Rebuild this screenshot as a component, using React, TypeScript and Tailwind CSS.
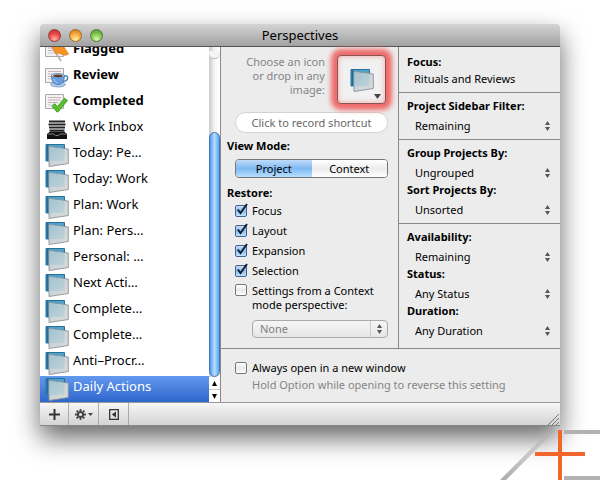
import { useState } from "react";
import type { ReactNode } from "react";

function PerspectiveIcon() {
  return (
    <svg width="24" height="24" viewBox="0 0 24 24" fill="none" className="shrink-0">
      <defs>
        <linearGradient id="frame" x1="0" y1="0" x2="1" y2="1">
          <stop offset="0" stopColor="#bccdd4" />
          <stop offset="1" stopColor="#dcdcdc" />
        </linearGradient>
        <linearGradient id="pane" x1="0" y1="0" x2="1" y2="1">
          <stop offset="0" stopColor="#a3c3cf" />
          <stop offset="1" stopColor="#c0d2d9" />
        </linearGradient>
      </defs>
      <path d="M1 1.500H19.500V18H1Z" fill="#4da3cc" stroke="#2b6f96" />
      <path d="M1.500 2H3.500V17.500H1.500Z" fill="#1f6d9c" />
      <path d="M4 3.500L23.300 6V20.500L4 23.500Z" fill="url(#frame)" stroke="#8c9296" strokeWidth=".9" />
      <path d="M4.500 4.200L19.500 6V18H4.500Z" fill="url(#pane)" />
    </svg>
  );
}

function Sheet() {
  return (
    <>
      <path d="M.5 3.500H18.500V17.500H.5Z" fill="#f4f3f3" stroke="#a9a9ab" />
      <path d="M3 6.500H16M3 9H16M3 11.500H13" stroke="#c9b3b5" />
      <path d="M3 14H11" stroke="#c3c9d4" />
    </>
  );
}

function FlaggedIcon() {
  return (
    <svg width="24" height="24" viewBox="0 0 24 24" fill="none" className="shrink-0">
      <Sheet />
      <path d="M7 8L16 22" stroke="#b3aca4" strokeWidth="1.500" />
      <path d="M7 7C11 4 14 10 19 8L23.500 15C18 19 16 12 11 15Z" fill="#f7931e" stroke="#d9741a" strokeWidth=".6" />
    </svg>
  );
}

function ReviewIcon() {
  return (
    <svg width="24" height="24" viewBox="0 0 24 24" fill="none" className="shrink-0">
      <Sheet />
      <ellipse cx="13" cy="19.500" rx="7.500" ry="2.500" fill="#aac8ea" stroke="#6f93bf" strokeWidth=".7" />
      <path d="M19 11C24 9.500 24 16 18 16.500" stroke="#4f83bf" strokeWidth="1.500" />
      <path d="M6.500 10.500H19.500C19.500 16 17.500 19.500 13 19.500S6.500 16 6.500 10.500Z" fill="#6a9fdc" stroke="#3f6fa8" strokeWidth=".7" />
      <ellipse cx="13" cy="10.500" rx="6.500" ry="2" fill="#d8e6f5" stroke="#4a79b0" strokeWidth=".7" />
      <ellipse cx="13" cy="10.800" rx="4.800" ry="1.200" fill="#5c3a2a" />
      <path d="M9 14C9.500 16 10.500 17.500 12 18" stroke="#b9d6f6" />
    </svg>
  );
}

function CompletedIcon() {
  return (
    <svg width="24" height="24" viewBox="0 0 24 24" fill="none" className="shrink-0">
      <Sheet />
      <path d="M7 15.500L9.500 12.500L12.500 15.500L19.500 7L22.500 9.500L13 21H12Z" fill="#57bf2b" stroke="#3a9a1c" strokeWidth=".8" />
    </svg>
  );
}

function InboxIcon() {
  return (
    <svg width="24" height="24" viewBox="0 0 24 24" fill="none" className="shrink-0">
      <path d="M4 4.500H20M3.500 7.500H20.500M4 10.500H20M4.500 13.500H19.500" stroke="#222" strokeWidth="1.800" />
      <path d="M2 17L5 14.500H19L22 17V22H2Z" fill="#111" />
      <path d="M2.500 17H9L10.500 18.500H13.500L15 17H21.500" stroke="#999" strokeWidth=".8" />
    </svg>
  );
}

const items: { name: string; icon?: ReactNode; bold?: boolean }[] = [
  { name: "Flagged", icon: <FlaggedIcon />, bold: true },
  { name: "Review", icon: <ReviewIcon />, bold: true },
  { name: "Completed", icon: <CompletedIcon />, bold: true },
  { name: "Work Inbox", icon: <InboxIcon /> },
  { name: "Today: Pe…" },
  { name: "Today: Work" },
  { name: "Plan: Work" },
  { name: "Plan: Pers…" },
  { name: "Personal: …" },
  { name: "Next Acti…" },
  { name: "Complete…" },
  { name: "Complete…" },
  { name: "Anti–Procr…" },
  { name: "Daily Actions" },
];

function Arrows() {
  return (
    <svg width="5" height="10" viewBox="0 0 5 10" className="pointer-events-none absolute top-1/2 right-1.5 -translate-y-1/2 fill-[#555]">
      <path d="M2.500 0L5 4H0ZM2.500 10L0 6H5Z" />
    </svg>
  );
}

function Field({ id, label, value }: { id: string; label: string; value: string }) {
  return (
    <div className="flex flex-col gap-0.5">
      <label htmlFor={id} className="text-[11px] leading-4 font-bold">
        {label}
      </label>
      <div className="relative">
        <select id={id} className="block h-[19px] w-full appearance-none bg-transparent pl-2 text-[11px] leading-4">
          <option>{value}</option>
        </select>
        <Arrows />
      </div>
    </div>
  );
}

function Check({ label, on = false, top = false }: { label: string; on?: boolean; top?: boolean }) {
  const [checked, setChecked] = useState(on);
  return (
    <label className={`flex gap-[5px] text-[11px] leading-[14px] ${top ? "items-start" : "h-5 items-center"}`}>
      <span className="relative block size-3 shrink-0">
        <input
          type="checkbox"
          checked={checked}
          onChange={(e) => setChecked(e.target.checked)}
          className="block size-3 appearance-none rounded-xs border border-[#777] bg-linear-to-b from-white via-[#e8e8e8] to-white checked:border-[#44648f] checked:from-[#c4dcf6] checked:via-[#8dbdf0] checked:to-[#bfe6ff]"
        />
        {checked && (
          <svg width="14" height="14" viewBox="0 0 14 14" fill="none" className="pointer-events-none absolute -top-0.5 left-0">
            <path d="M2.800 6.500L5.500 10L12 1" stroke="#14202e" strokeWidth="2" />
          </svg>
        )}
      </span>
      <span>{label}</span>
    </label>
  );
}

export default function App() {
  const [selected, setSelected] = useState(items.length - 1);
  const [mode, setMode] = useState("Project");

  return (
    <div className="min-h-screen overflow-hidden bg-white pt-6 font-['Noto_Sans','Lucida_Grande',sans-serif] text-black">
      <div className="mx-10 rounded-t-[4px] shadow-[0_12px_26px_rgba(0,0,0,0.6)]">
        {/* Title bar */}
        <header className="grid h-[23px] grid-cols-[1fr_auto_1fr] items-center rounded-t-[4px] border-b border-[#555] bg-linear-to-b from-[#d4d4d4] to-[#a2a2a2] px-2">
          <div className="flex gap-2">
            <button aria-label="Close" className="size-[13px] rounded-full border border-[#9c3b38] bg-[radial-gradient(circle_at_50%_85%,#ffb3a8,#e8453f_55%,#b8302c)]" />
            <button aria-label="Minimize" className="size-[13px] rounded-full border border-[#a5692a] bg-[radial-gradient(circle_at_50%_85%,#fff0a0,#f5a53a_55%,#c9741c)]" />
            <button aria-label="Zoom" className="size-[13px] rounded-full border border-[#4f7f35] bg-[radial-gradient(circle_at_50%_85%,#dcf7a8,#7fc250_55%,#4c8f30)]" />
          </div>
          <h1 className="text-[13px] leading-5">Perspectives</h1>
        </header>

        <div className="flex bg-[#ececec]">
          {/* Sidebar */}
          <div className="flex w-[181px] shrink-0 border-r border-[#888] bg-white">
            <ul className="flex h-0 min-h-full grow flex-col justify-end overflow-hidden">
              {items.map((item, i) => (
                <li key={i} className="shrink-0">
                  <button
                    onClick={() => setSelected(i)}
                    className={`flex h-[26px] w-full items-start gap-1 pt-px pl-[5px] text-left text-[13px] leading-[18px] ${item.bold ? "font-bold" : ""} ${
                      i === selected ? "bg-linear-to-b from-[#6399ee] to-[#2f66cc] text-white" : ""
                    }`}
                  >
                    {item.icon ?? <PerspectiveIcon />}
                    {item.name}
                  </button>
                </li>
              ))}
            </ul>
            <div className="flex w-[11px] flex-col bg-linear-to-r from-[#c9c9c9] via-[#f4f4f4] to-white">
              <div className="mt-1 h-2 rounded-b-full border-b border-[#bbb] bg-[#f5f5f5]" />
              <div className="mt-[73px] grow rounded-full border border-[#3f74bd] bg-linear-to-r from-[#4f9bea] via-[#b4dcfb] to-[#5ca6ee]" />
              <button aria-label="Scroll up" className="flex h-3 items-center justify-center bg-white">
                <svg width="5" height="5" viewBox="0 0 5 5"><path d="M2.500 0L5 5H0Z" /></svg>
              </button>
              <button aria-label="Scroll down" className="flex h-[13px] items-center justify-center border-t border-[#ccc] bg-white">
                <svg width="5" height="5" viewBox="0 0 5 5"><path d="M2.500 5L0 0H5Z" /></svg>
              </button>
            </div>
          </div>

          <main className="min-w-0 grow">
            <div className="flex border-b border-[#888]">
              <section className="flex min-w-0 grow flex-col pt-2 pr-2.5 pb-2.5 pl-1.5">
                <div className="flex justify-end gap-3 pr-0.5">
                  <p className="w-[88px] text-right text-[11px] leading-[14px] text-[#858585]">Choose an icon or drop in any image:</p>
                  <button
                    aria-label="Choose an icon"
                    className="relative flex size-[49px] shrink-0 items-center justify-center rounded-[4px] border border-[#855] bg-[#f1f1f1] shadow-[0_0_5px_6px_#ee6b6b,inset_0_0_4px_1px_#f5b5b5]"
                  >
                    <PerspectiveIcon />
                    <svg width="7" height="5" viewBox="0 0 7 5" className="absolute right-1 bottom-1 fill-[#444]">
                      <path d="M0 0H7L3.500 5Z" />
                    </svg>
                  </button>
                </div>

                <button className="mt-2 ml-2 h-[21px] rounded-full border border-[#d2d2d2] bg-white text-[11px] leading-4 text-[#666]">
                  Click to record shortcut
                </button>

                <h2 className="mt-[5px] text-[11px] leading-4 font-bold">View Mode:</h2>
                <div className="mt-[5px] ml-2 flex h-[19px] overflow-hidden rounded-[4px] border border-[#777]">
                  {["Project", "Context"].map((m) => (
                    <button
                      key={m}
                      onClick={() => setMode(m)}
                      className={`flex-1 bg-linear-to-b text-[11px] leading-4 ${
                        m === mode ? "from-[#c0dcf8] via-[#7fb9f2] to-[#b5e0fe]" : "from-white via-[#ececec] to-white"
                      }`}
                    >
                      {m}
                    </button>
                  ))}
                </div>

                <h2 className="mt-[7px] text-[11px] leading-4 font-bold">Restore:</h2>
                <div className="ml-2">
                  <Check label="Focus" on />
                  <Check label="Layout" on />
                  <Check label="Expansion" on />
                  <Check label="Selection" on />
                  <div className="pt-[3px]">
                    <Check label="Settings from a Context mode perspective:" top />
                  </div>
                  <div className="relative mt-2 ml-[17px]">
                    <select
                      disabled
                      aria-label="Context mode perspective"
                      className="block h-[18px] w-full appearance-none rounded-[4px] border border-[#aaa] bg-linear-to-b from-[#f6f6f6] to-[#e6e6e6] pl-[7px] text-[11px] leading-4 text-[#808080] opacity-100"
                    >
                      <option>None</option>
                    </select>
                    <span className="absolute inset-y-px right-[17px] w-px bg-[#ccc]" />
                    <Arrows />
                  </div>
                </div>
              </section>

              <section className="w-[162px] shrink-0 border-l border-[#888]">
                <div className="flex flex-col gap-px border-b border-[#888] px-2 pt-[7px] pb-[5px] text-[11px] leading-4">
                  <h2 className="font-bold">Focus:</h2>
                  <p className="pl-[7px]">Rituals and Reviews</p>
                </div>
                <div className="border-b border-[#888] pt-[5px] pr-1 pb-1 pl-2">
                  <Field id="filter" label="Project Sidebar Filter:" value="Remaining" />
                </div>
                <div className="border-b border-[#888] pt-[5px] pr-1 pb-1 pl-2">
                  <Field id="group" label="Group Projects By:" value="Ungrouped" />
                  <Field id="sort" label="Sort Projects By:" value="Unsorted" />
                </div>
                <div className="pt-[5px] pr-1 pb-1 pl-2">
                  <Field id="availability" label="Availability:" value="Remaining" />
                  <Field id="status" label="Status:" value="Any Status" />
                  <Field id="duration" label="Duration:" value="Any Duration" />
                </div>
              </section>
            </div>

            <div className="pt-[9px] pb-2.5 pl-3.5">
              <Check label="Always open in a new window" />
              <p className="pl-[17px] text-[11px] leading-[14px] text-[#858585]">Hold Option while opening to reverse this setting</p>
            </div>
          </main>
        </div>

        {/* Bottom bar */}
        <footer className="flex h-6 border-t border-b border-t-[#999] border-b-[#888] bg-linear-to-b from-[#f6f6f6] to-[#d4d4d4]">
          <button aria-label="Add" className="flex w-[29px] items-center justify-center border-r border-[#aaa]">
            <svg width="11" height="11" viewBox="0 0 11 11" stroke="#333" strokeWidth="2">
              <path d="M5.500 0V11M0 5.500H11" />
            </svg>
          </button>
          <button aria-label="Actions" className="flex w-[30px] items-center justify-center gap-0.5 border-r border-[#aaa]">
            <svg width="11" height="11" viewBox="0 0 11 11" fill="none" stroke="#444">
              <circle cx="5.500" cy="5.500" r="2.600" strokeWidth="2" />
              <path d="M5.500 0V2M5.500 9V11M0 5.500H2M9 5.500H11M1.600 1.600L3 3M8 8L9.400 9.400M9.400 1.600L8 3M3 8L1.600 9.400" strokeWidth="1.800" />
            </svg>
            <svg width="5" height="3" viewBox="0 0 5 3" fill="#444"><path d="M0 0H5L2.500 3Z" /></svg>
          </button>
          <button aria-label="Toggle details" className="flex w-[30px] items-center justify-center border-r border-[#aaa]">
            <svg width="10" height="11" viewBox="0 0 10 11" fill="none">
              <path d="M.7 .7H9.300V10.300H.7Z" stroke="#333" strokeWidth="1.300" />
              <path d="M7 2.500V8.500L2.800 5.500Z" fill="#333" />
            </svg>
          </button>
          <svg width="11" height="11" viewBox="0 0 11 11" stroke="#777" className="mr-px ml-auto self-end">
            <path d="M0 11L11 0M4 11L11 4M8 11L11 8" />
          </svg>
        </footer>
      </div>

      {/* Corner mark */}
      <div className="mt-1 flex justify-end">
        <svg width="100" height="50" viewBox="0 0 100 50" className="relative">
          <defs>
            <linearGradient id="slope" x1="0" y1="1" x2="1" y2="0">
              <stop offset="0" stopColor="#aaa" />
              <stop offset="1" stopColor="#aaa" stopOpacity=".2" />
            </linearGradient>
          </defs>
          <path d="M0 50L50 0H56L6 50Z" fill="url(#slope)" />
          <path d="M64 0H100V4H64ZM64 46H100V50H64Z" fill="#b3b1b2" />
          <path d="M58 0H62V50H58ZM35 22H85V26H35Z" fill="#f1662f" />
        </svg>
      </div>
    </div>
  );
}
